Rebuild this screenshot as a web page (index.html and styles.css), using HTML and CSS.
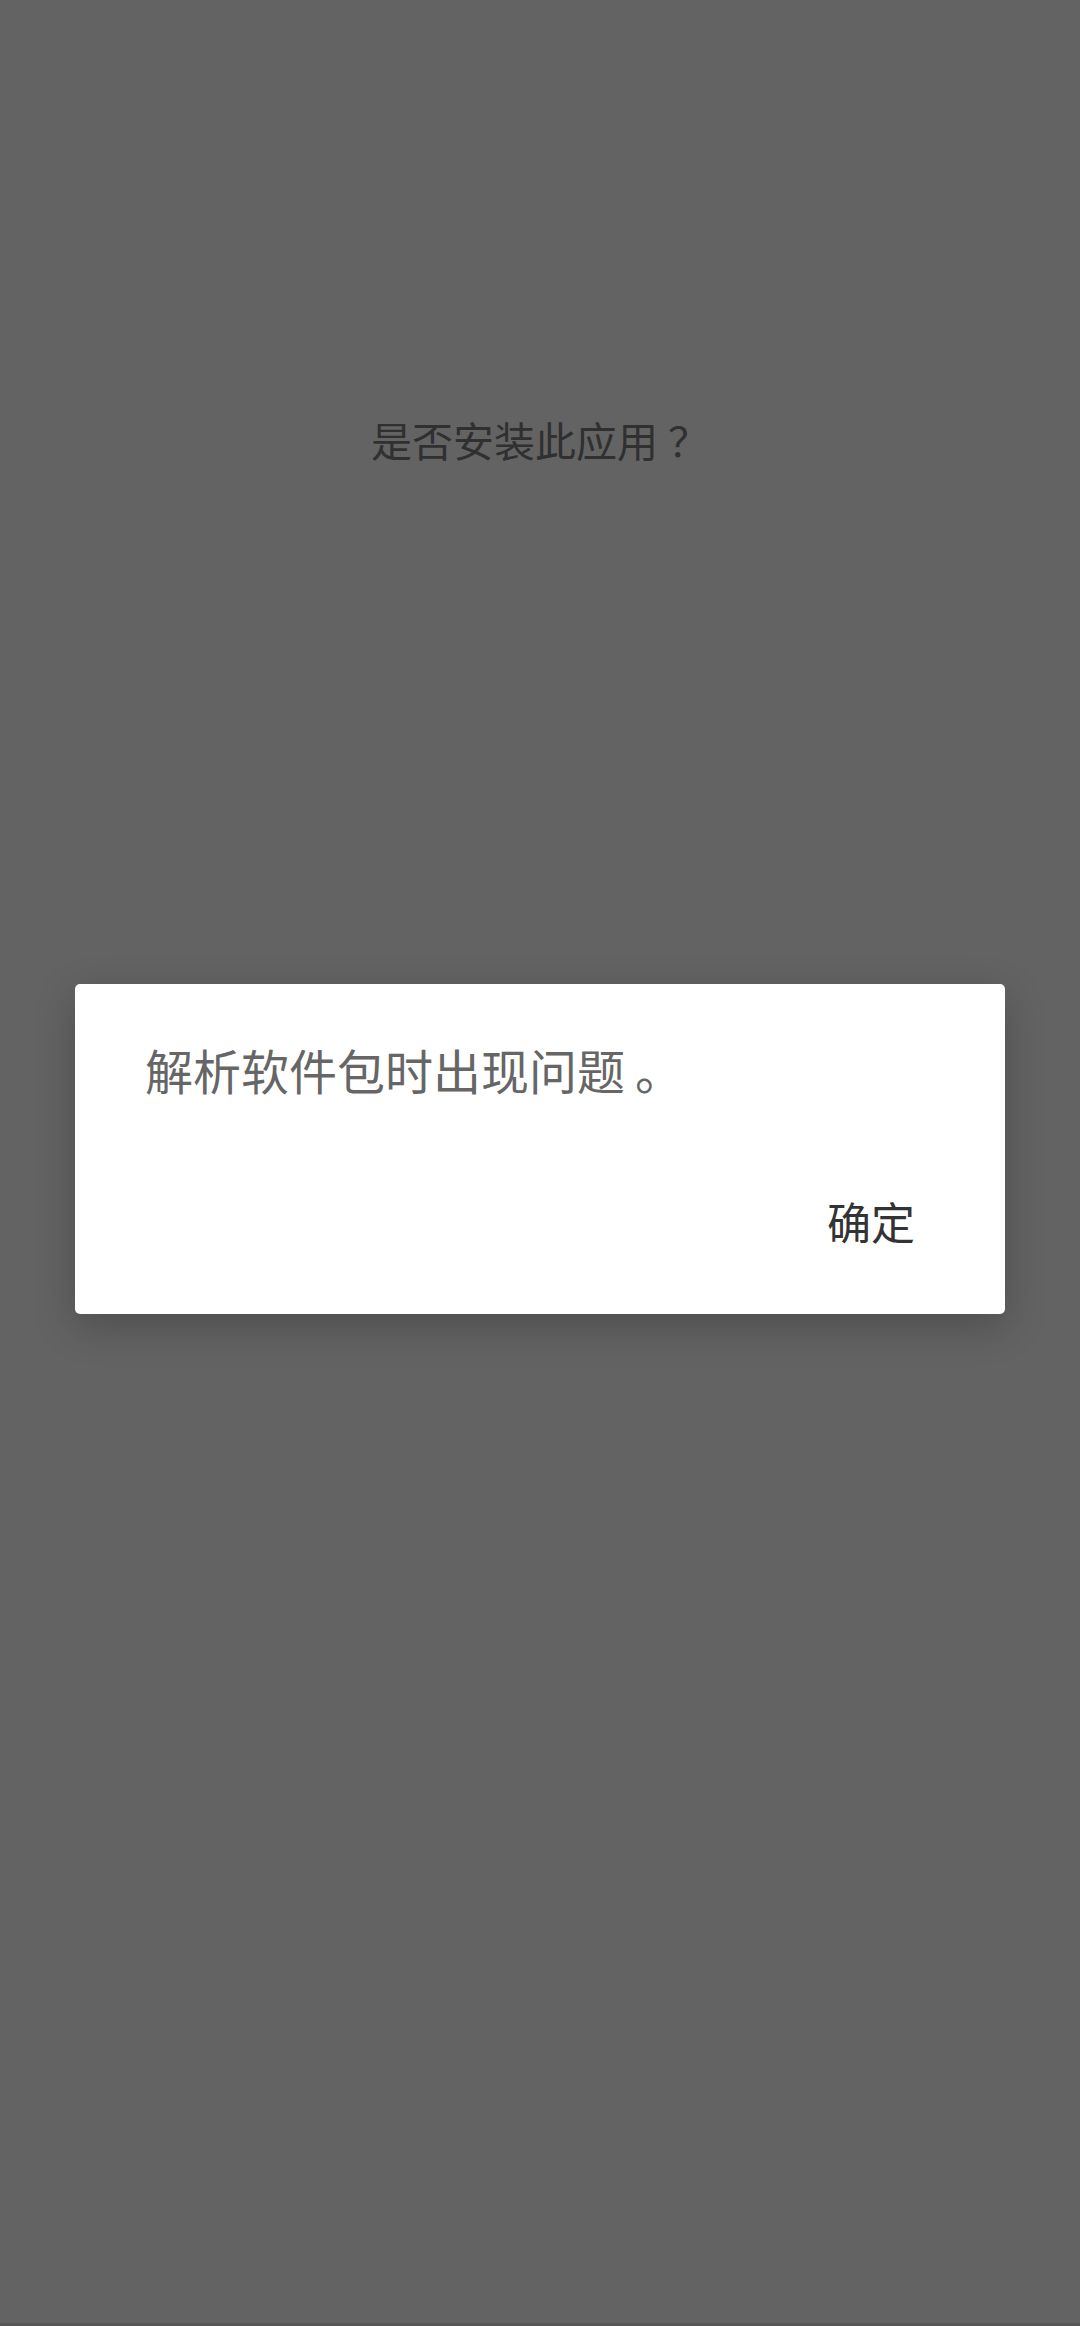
FILE: index.html
```html
<!DOCTYPE html>
<html lang="zh-CN">
<head>
<meta charset="utf-8">
<title>安装</title>
<link rel="stylesheet" href="styles.css">
</head>
<body>
<div class="screen">
  <header class="header">
    <h1 class="title">是否安装此应用<span class="punct">？</span></h1>
  </header>
  <div class="dialog">
    <p class="message">解析软件包时出现问题<span class="punct">。</span></p>
    <div class="actions">
      <button class="btn">确定</button>
    </div>
  </div>
  <div class="navline"></div>
</div>
</body>
</html>
```
FILE: styles.css
```css
html, body {
  margin: 0;
  padding: 0;
}
body {
  background: #636363;
  font-family: "Noto Sans CJK SC", "Noto Sans", sans-serif;
}
.screen {
  height: 2326px;
  display: flex;
  flex-direction: column;
  overflow: hidden;
}
.header {
  padding-top: 419px;
  text-align: center;
}
.title {
  margin: 0;
  font-size: 41px;
  line-height: 41px;
  font-weight: 400;
  color: #303030;
}
.punct {
  margin-left: 10px;
}
.dialog {
  margin: 524px 0 0 75px;
  width: 930px;
  height: 330px;
  box-sizing: border-box;
  background: #ffffff;
  border-radius: 5px;
  box-shadow: 0 12px 40px rgba(0, 0, 0, 0.22);
  padding: 61px 90px 0 70px;
  display: flex;
  flex-direction: column;
}
.message {
  margin: 0;
  font-size: 48px;
  line-height: 48px;
  color: #666666;
}
.actions {
  margin-top: 106px;
  display: flex;
  justify-content: flex-end;
}
.btn {
  border: 0;
  background: transparent;
  padding: 0;
  font-family: inherit;
  font-size: 44px;
  line-height: 44px;
  color: #333333;
}
.navline {
  margin-top: auto;
  height: 3px;
  background: #575757;
}
```
